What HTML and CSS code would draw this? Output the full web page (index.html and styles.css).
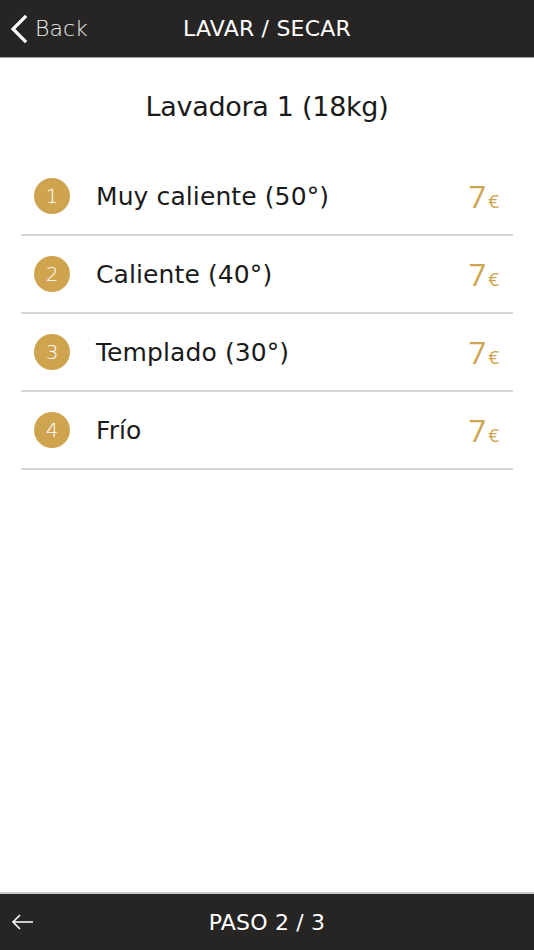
FILE: index.html
```html
<!DOCTYPE html>
<html>
<head>
<meta charset="utf-8">
<link rel="stylesheet" href="styles.css">
</head>
<body>
<div class="app">
  <header class="topbar">
    <div class="back">
      <svg class="chev" width="18" height="28" viewBox="0 0 18 28"><path d="M15 2 L3 14 L15 26" fill="none" stroke="#fff" stroke-width="3.2" stroke-linecap="square"/></svg>
      <span>Back</span>
    </div>
    <div class="title">LAVAR / SECAR</div>
  </header>
  <main class="content">
    <h1 class="machine">Lavadora 1 (18kg)</h1>
    <ul class="list">
      <li class="row"><span class="num">1</span><span class="label">Muy caliente (50°)</span><span class="price">7<small>€</small></span></li>
      <li class="row"><span class="num">2</span><span class="label">Caliente (40°)</span><span class="price">7<small>€</small></span></li>
      <li class="row"><span class="num">3</span><span class="label">Templado (30°)</span><span class="price">7<small>€</small></span></li>
      <li class="row"><span class="num">4</span><span class="label">Frío</span><span class="price">7<small>€</small></span></li>
    </ul>
  </main>
  <footer class="bottombar">
    <svg class="arrow" width="24" height="16" viewBox="0 0 24 16"><path d="M22 8 H2 M9 1 L2 8 L9 15" fill="none" stroke="#fff" stroke-width="1.6"/></svg>
    <div class="step">PASO 2 / 3</div>
  </footer>
</div>
</body>
</html>
```
FILE: styles.css
```css
* { box-sizing: border-box; }
html, body { margin: 0; padding: 0; }
body { font-family: "DejaVu Sans", sans-serif; background: #fff; color: #1a1a1a; }
.app { width: 534px; height: 950px; display: flex; flex-direction: column; }
.topbar { height: 58px; background: #262524; border-bottom: 1px solid #9a9a9a; display: flex; align-items: center; justify-content: center; position: relative; color: #fff; }
.back { position: absolute; left: 10px; top: 0; height: 57px; display: flex; align-items: center; gap: 7px; font-size: 22px; font-weight: 300; color: #eee; }
.chev { display: block; }
.title { font-size: 22px; letter-spacing: 0.2px; }
.content { flex: 1; padding: 0 21px; }
.machine { margin: 33px 0 0; text-align: center; font-size: 27px; font-weight: normal; letter-spacing: -0.3px; height: 67px; }
.list { list-style: none; margin: 0; padding: 0; }
.row { height: 78px; border-bottom: 2px solid #d6d6d9; display: flex; align-items: center; padding: 0 14px 0 13px; }
.num { width: 36px; height: 36px; border-radius: 50%; background: #cfa44e; color: #fff; font-size: 20px; font-weight: 300; display: flex; align-items: center; justify-content: center; flex: none; }
.label { margin-left: 26px; font-size: 25px; flex: 1; letter-spacing: 0.1px; }
.price { color: #cfa44e; font-family: "Open Sans", "DejaVu Sans", sans-serif; font-size: 31px; font-weight: 400; }
.price small { font-size: 19px; margin-left: 2px; }
.bottombar { height: 58px; background: #262524; border-top: 2px solid #c8c8c8; display: flex; align-items: center; justify-content: center; position: relative; color: #fff; }
.arrow { position: absolute; left: 11px; top: 20px; }
.step { font-size: 22px; letter-spacing: 0.2px; }
```
